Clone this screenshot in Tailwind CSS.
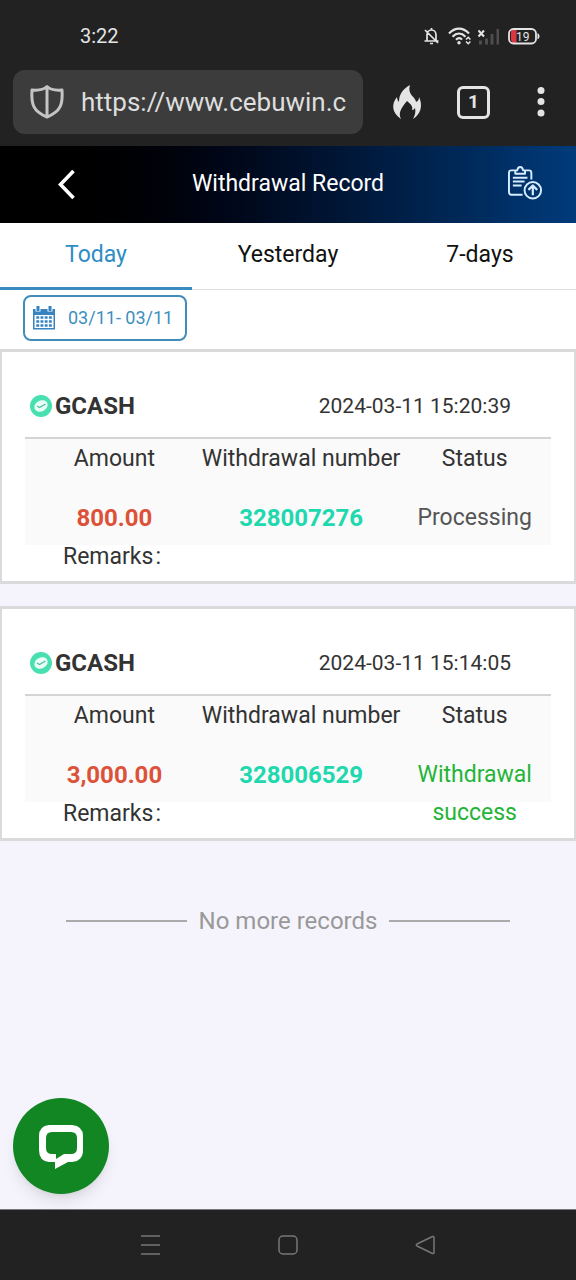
<!DOCTYPE html>
<html lang="en">
<head>
<meta charset="utf-8">
<meta name="viewport" content="width=device-width, initial-scale=1">
<title>Withdrawal Record</title>
<script src="https://cdn.jsdelivr.net/npm/@tailwindcss/browser@4"></script>
</head>
<body class="flex min-h-screen flex-col bg-[#f5f4fc] font-['Roboto',sans-serif] text-[#333]">

<!-- System status bar and browser toolbar -->
<div class="bg-[#222] text-[#e4e4e4]">
  <div class="flex h-[70px] items-center justify-between pt-0.5 pr-9 pl-20">
    <span class="text-[20px] leading-6">3:22</span>
    <div class="flex items-center gap-1.5">
      <svg class="h-5 w-5" viewBox="1 0 20 20" fill="none" stroke="currentColor" stroke-width="1.700" role="img" aria-label="Muted">
        <path d="M3.500 15h14M6 15V9c0-3 2-5 4.500-5s4.500 2 4.500 5v6M10.500 2v2M9 17.500h3M4 4l13 13"/>
      </svg>
      <svg class="h-5 w-6" viewBox="0 0 24 20" fill="none" stroke="currentColor" stroke-width="2.200" role="img" aria-label="Wi-Fi">
        <path d="M1 7.500C7 1 15 1 21 7.500M4.500 10.700c4-4 9-4 13 0M8 13.700c2-2 4.500-2 6 0"/>
        <circle cx="11" cy="16.800" r="1.700" fill="currentColor" stroke="none"/>
        <path d="M18 13.500l2.200-2.200 2.200 2.200M18 15.500l2.200 2.200 2.200-2.200" stroke-width="1.600"/>
      </svg>
      <svg class="h-5 w-6" viewBox="1 0 24 20" role="img" aria-label="No signal">
        <path d="M2 14.500h3v4H2zM8 12.500h3v6H8zM13.500 8h3v10.500h-3zM19.500 3h2.500v15.500h-2.500z" fill="#4d4d4d"/>
        <path d="M1.500 4.500l5.500 6M7 4.500l-5.500 6" stroke="currentColor" stroke-width="2"/>
      </svg>
      <svg class="h-5 w-8" viewBox="0 0 32 20" role="img" aria-label="Battery 19 percent">
        <path d="M4 4h4.500v13H6q-3-1-3-4V7q0-2 1-3z" fill="#d9363e"/>
        <rect x="1" y="3" width="27" height="14.500" rx="4.500" fill="none" stroke="currentColor" stroke-width="1.800"/>
        <path d="M29.500 7v6.500q2-1 2-3.200t-2-3.300z" fill="currentColor"/>
        <text x="8" y="14.500" font-size="12" font-family="Roboto" fill="currentColor">19</text>
      </svg>
    </div>
  </div>
  <div class="flex items-center pr-[26px] pb-3 pl-[13px]">
    <form class="flex h-16 min-w-0 flex-1 items-center gap-4 rounded-xl bg-[#3c3c3c] pr-2 pl-4">
      <svg class="h-9 w-9 shrink-0 text-[#c4c4c4]" viewBox="0 0 36 36" fill="none" stroke="currentColor" stroke-width="3" stroke-linejoin="round" aria-hidden="true">
        <path d="M18 2.500C14 6.500 9 6.500 3 6 2 20 4 27.500 18 33 32 27.500 34 20 33 6 27 6.500 22 6.500 18 2.500zM18 3v30"/>
      </svg>
      <input aria-label="Address" type="text" value="https://www.cebuwin.c" class="w-full min-w-0 bg-transparent text-[26px] leading-8 text-[#dedede] outline-none">
    </form>
    <div class="flex items-center pl-7">
      <button type="button" aria-label="Clear browsing data" class="w-8">
        <svg class="h-9 w-8" viewBox="0 0 32 36" fill="currentColor">
          <path d="M19 1C12 5 8 10 8 18c-1-1-2-3-2-5C0 20 1 29 10 35c-3-6 0-11 6-18 5 4 6 6 5 9 2 0 2-1 3-2 1 4 0 7-2 11 8-5 10-14 6-22 0 3-1 4-3 5C25 13 16 11 19 1z"/>
        </svg>
      </button>
      <button type="button" aria-label="1 open tab" class="ml-[34px] flex h-[33px] w-[33px] items-center justify-center rounded-md border-3 border-current text-[19px] leading-6 font-bold">1</button>
      <button type="button" aria-label="Menu" class="ml-10 w-5">
        <svg class="h-8 w-5" viewBox="0 0 20 32" fill="currentColor"><circle cx="11" cy="4.500" r="3.500"/><circle cx="11" cy="15.500" r="3.500"/><circle cx="11" cy="27" r="3.500"/></svg>
      </button>
    </div>
  </div>
</div>

<!-- Page header -->
<header class="grid h-[77px] grid-cols-[1fr_auto_1fr] items-center bg-linear-to-r from-black from-5% to-[#003b7b] px-8 pb-0.5 text-white">
  <button type="button" aria-label="Back" class="ml-6 w-5">
    <svg class="h-8 w-5" viewBox="0 0 20 32" fill="none" stroke="currentColor" stroke-width="3.600"><path d="M17.500 3L4.500 16.500 17.500 30"/></svg>
  </button>
  <h1 class="text-[23px] leading-8">Withdrawal Record</h1>
  <button type="button" aria-label="Submit record" class="w-9 justify-self-end">
    <svg class="h-9 w-9" viewBox="1 1 37 37" fill="none" stroke="#d5ebff" stroke-width="2" stroke-linejoin="round">
      <path d="M8 5.500H4.500Q2 5.500 2 8v20q0 2.500 2.500 2.500H16M19 5.500h3.500Q25 5.500 25 8v7M8.500 9V5.500h2Q11 2 13.500 2t3 3.500h2V9z"/>
      <path d="M6 13h15M6 17h12M6 21h9"/>
      <circle cx="26.500" cy="26" r="8.500"/>
      <path d="M26.500 31v-9.500M22 25.500l4.500-4.500 4.500 4.500" stroke-width="2.300"/>
    </svg>
  </button>
</header>

<!-- Period tabs -->
<nav class="grid h-[67px] grid-cols-3 bg-white text-[23px] leading-8 text-[#111]">
  <a href="#today" aria-current="page" class="border-b-3 border-[#3a8abf] pt-4 text-center text-[#2f8dc4]">Today</a>
  <a href="#yesterday" class="border-b border-[#ddd] pt-4 text-center">Yesterday</a>
  <a href="#week" class="border-b border-[#ddd] pt-4 text-center">7-days</a>
</nav>
<div class="bg-white px-[23px] pt-[5px] pb-2">
  <button type="button" class="flex h-[46px] items-center gap-3 rounded-lg border-2 border-[#3f8db8] pr-3 pl-[7px] text-[18px] leading-6 text-[#3d8fc0]">
    <svg class="h-6 w-6" viewBox="0 0 24 24" aria-hidden="true">
      <path d="M1 3h22v20.500H1z" fill="#3583c0"/>
      <path d="M6 0v5.500M18 0v5.500" stroke="#fff" stroke-width="5"/>
      <path d="M6 0v5M18 0v5" stroke="#3583c0" stroke-width="3"/>
      <path d="M2.500 9h19v13h-19z" fill="#fff"/>
      <path d="M4.300 11.500h15.500M4.300 15.500h15.500M4.300 19.500h15.500" stroke="#3583c0" stroke-width="2.600" stroke-dasharray="2.900 1.300"/>
    </svg>
    <span class="whitespace-nowrap">03/11- 03/11</span>
  </button>
</div>

<main>
  <article class="border-x-2 border-y-3 border-[#dadadc] bg-white pb-3">
    <div class="mx-[23px] border-b-2 border-[#d4d4d4]">
      <div class="flex h-[85px] items-end justify-between pr-10 pb-[15px] pl-1">
        <h2 class="flex items-center gap-0.5 text-[24px] leading-8 font-bold">
          <svg class="h-6 w-6" viewBox="0 0 24 24" aria-hidden="true"><circle cx="12" cy="12" r="11" fill="#48dfb1"/><ellipse cx="12" cy="12" rx="7" ry="5.500" fill="#e9fff6" transform="rotate(-28 12 12)"/><path d="M8 12l2.500 1.500 6-3.500" fill="none" stroke="#48bfa0" stroke-width="1.200"/></svg>GCASH</h2>
        <time datetime="2024-03-11T15:20:39" class="text-[21px] leading-8">2024-03-11 15:20:39</time>
      </div>
    </div>
    <table class="mx-auto w-[calc(100%-46px)] table-fixed bg-[#fafafa] text-center text-[23px] leading-[38px]">
      <colgroup><col class="w-[34%]"><col class="w-[37%]"><col class="w-[29%]"></colgroup>
      <thead><tr class="h-10"><th class="p-0 font-normal">Amount</th><th class="p-0 font-normal whitespace-nowrap"><span class="-mx-2">Withdrawal number</span></th><th class="p-0 font-normal">Status</th></tr></thead>
      <tbody><tr class="align-top"><td class="p-0 pt-5 text-[24px] font-bold text-[#dd5138]">800.00</td><td class="p-0 pt-5 text-[24px] font-bold text-[#20d8ae]">328007276</td><td class="p-0 pt-5 text-[#555]"><div class="h-[46px]">Processing</div></td></tr></tbody>
    </table>
    <p class="pl-[61px] text-[23px] leading-6">Remarks<span class="pl-0.5">:</span></p>
  </article>

  <article class="mt-[22px] border-x-2 border-y-3 border-[#dadadc] bg-white pb-3">
    <div class="mx-[23px] border-b-2 border-[#d4d4d4]">
      <div class="flex h-[85px] items-end justify-between pr-10 pb-[15px] pl-1">
        <h2 class="flex items-center gap-0.5 text-[24px] leading-8 font-bold">
          <svg class="h-6 w-6" viewBox="0 0 24 24" aria-hidden="true"><circle cx="12" cy="12" r="11" fill="#48dfb1"/><ellipse cx="12" cy="12" rx="7" ry="5.500" fill="#e9fff6" transform="rotate(-28 12 12)"/><path d="M8 12l2.500 1.500 6-3.500" fill="none" stroke="#48bfa0" stroke-width="1.200"/></svg>GCASH</h2>
        <time datetime="2024-03-11T15:14:05" class="text-[21px] leading-8">2024-03-11 15:14:05</time>
      </div>
    </div>
    <table class="mx-auto w-[calc(100%-46px)] table-fixed bg-[#fafafa] text-center text-[23px] leading-[38px]">
      <colgroup><col class="w-[34%]"><col class="w-[37%]"><col class="w-[29%]"></colgroup>
      <thead><tr class="h-10"><th class="p-0 font-normal">Amount</th><th class="p-0 font-normal whitespace-nowrap"><span class="-mx-2">Withdrawal number</span></th><th class="p-0 font-normal">Status</th></tr></thead>
      <tbody><tr class="align-top"><td class="p-0 pt-5 text-[24px] font-bold text-[#dd5138]">3,000.00</td><td class="p-0 pt-5 text-[24px] font-bold text-[#20d8ae]">328006529</td><td class="p-0 pt-5 text-[#24b438]"><div class="h-[46px]">Withdrawal success</div></td></tr></tbody>
    </table>
    <p class="pl-[61px] text-[23px] leading-6">Remarks<span class="pl-0.5">:</span></p>
  </article>

  <div class="mt-16 flex items-center gap-3 px-[66px] text-[#999]">
    <span class="h-0.5 flex-1 bg-[#aaa]"></span>
    <p class="text-[24px] leading-8">No more records</p>
    <span class="h-0.5 flex-1 bg-[#aaa]"></span>
  </div>
</main>

<!-- Chat launcher and system navigation -->
<div class="mt-auto px-[13px] pb-[15px]">
  <button type="button" aria-label="Open chat" class="flex h-24 w-24 items-center justify-center rounded-full bg-[#118623] shadow-lg">
    <svg class="h-12 w-12" viewBox="0 0 48 48"><path fill="#fff" fill-rule="evenodd" d="M12 3h23q11 1 11 11v14q0 11-11 12h-4l-13 7v-7h-6Q2 39 2 28V14Q2 4 12 3zM15 10q-6 0-6 6v10q0 6 6 6h4v5l8-5h7q6 0 6-6V16q0-6-6-6z"/></svg>
  </button>
</div>
<nav aria-label="System" class="flex h-[71px] items-center justify-center gap-[113px] border-t border-[#777] bg-[#222] text-[#777]">
  <button type="button" aria-label="Recent apps" class="w-6"><svg class="h-6 w-6" viewBox="0 0 24 24" fill="none" stroke="currentColor" stroke-width="1.500"><path d="M2 3h19M2 12h19M2 21h19"/></svg></button>
  <button type="button" aria-label="Home" class="w-6"><svg class="h-6 w-6" viewBox="0 0 24 24" fill="none" stroke="currentColor" stroke-width="1.500"><rect x="3" y="3" width="18" height="18" rx="4"/></svg></button>
  <button type="button" aria-label="Back" class="w-6"><svg class="h-6 w-6" viewBox="0 0 24 24" fill="none" stroke="currentColor" stroke-width="1.500" stroke-linejoin="round"><path d="M19.500 3.500q1.500-.5 1.500 1.500v14q0 2-1.500 1.500L4 13q-1.500-1 0-2z"/></svg></button>
</nav>
</body>
</html>
